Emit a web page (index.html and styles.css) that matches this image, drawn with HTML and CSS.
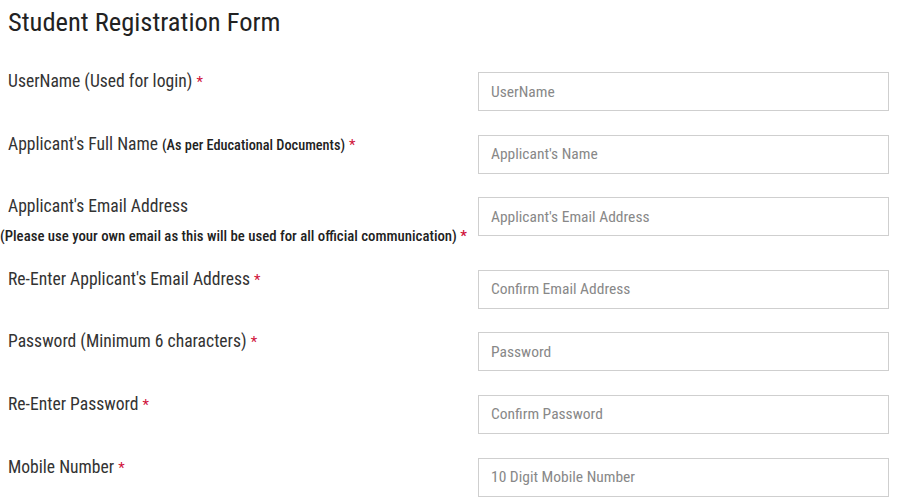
FILE: index.html
```html
<!DOCTYPE html>
<html lang="en">
<head>
    <meta charset="UTF-8">
    <title>Student Registration Form</title>
    <link rel="stylesheet" href="styles.css">
</head>
<body>

    <h1 class="form-title">Student Registration Form</h1>

    <form class="reg-form">
        <div class="form-row">
            <label class="form-label" for="username">UserName (Used for login) <span class="req">*</span></label>
            <input class="form-input" id="username" type="text" placeholder="UserName">
        </div>

        <div class="form-row">
            <label class="form-label" for="fullname">Applicant's Full Name <small class="hint">(As per Educational Documents)</small> <span class="req">*</span></label>
            <input class="form-input" id="fullname" type="text" placeholder="Applicant's Name">
        </div>

        <div class="form-row">
            <label class="form-label" for="email">
                Applicant's Email Address
                <span class="note">(Please use your own email as this will be used for all official communication) <span class="req">*</span></span>
            </label>
            <input class="form-input" id="email" type="email" placeholder="Applicant's Email Address">
        </div>

        <div class="form-row">
            <label class="form-label" for="email2">Re-Enter Applicant's Email Address <span class="req">*</span></label>
            <input class="form-input" id="email2" type="email" placeholder="Confirm Email Address">
        </div>

        <div class="form-row">
            <label class="form-label" for="password">Password (Minimum 6 characters) <span class="req">*</span></label>
            <input class="form-input" id="password" type="password" placeholder="Password">
        </div>

        <div class="form-row">
            <label class="form-label" for="password2">Re-Enter Password <span class="req">*</span></label>
            <input class="form-input" id="password2" type="password" placeholder="Confirm Password">
        </div>

        <div class="form-row">
            <label class="form-label" for="mobile">Mobile Number <span class="req">*</span></label>
            <input class="form-input" id="mobile" type="text" placeholder="10 Digit Mobile Number">
        </div>
    </form>

</body>
</html>
```

FILE: styles.css
```css
html, body {
    margin: 0;
    padding: 0;
    background-color: #fff;
}

body {
    padding: 8px 8px 0 8px;
    font-family: Roboto, "Liberation Sans", sans-serif;
    font-stretch: 80%;
    color: #333;
    overflow: hidden;
}

.form-title {
    margin: 0;
    font-size: 26.5px;
    font-weight: 380;
    line-height: 28px;
    color: #222;
}

.reg-form {
    margin-top: 36px;
    display: flex;
    flex-direction: column;
    gap: 23.6px;
}

.form-row {
    display: grid;
    grid-template-columns: 470px 411px;
    align-items: start;
}

.form-label {
    font-size: 17.6px;
    font-weight: 380;
    line-height: 24px;
    margin-top: -3px;
    color: #333;
}

.hint {
    font-size: 14.3px;
    font-weight: 500;
    color: #222;
}

.note {
    display: block;
    margin: 8px 0 0 -8px;
    font-size: 14.8px;
    font-weight: 500;
    line-height: 20px;
    color: #222;
    white-space: nowrap;
}

.req {
    color: #d0103a;
    font-size: 15px;
}

.form-input {
    box-sizing: border-box;
    width: 411px;
    height: 39px;
    margin: 0;
    padding: 0 12px;
    border: 1px solid #cfcfcf;
    border-radius: 0;
    font-family: inherit;
    font-stretch: 80%;
    font-size: 15.5px;
    font-weight: 380;
    color: #555;
    background: #fff;
    outline: none;
}

.form-input::placeholder {
    color: #888;
}
```
